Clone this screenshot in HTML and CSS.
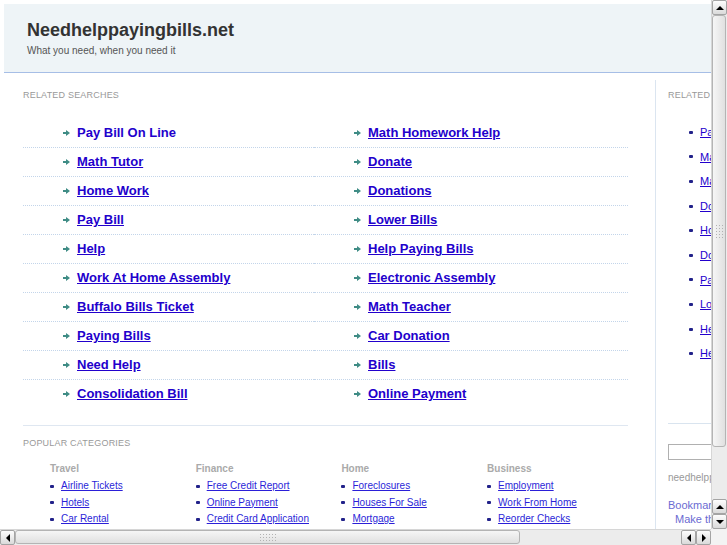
FILE: index.html
```html
<!DOCTYPE html>
<html lang="en">
<head>
    <meta charset="UTF-8">
    <title>Needhelppayingbills.net</title>
    <link rel="stylesheet" href="styles.css">
</head>
<body>
<div class="frame">
    <div class="viewport">
        <div class="page">
            <div class="header">
                <h1>Needhelppayingbills.net</h1>
                <p>What you need, when you need it</p>
            </div>
            <div class="main">
                <div class="content">
                    <h3 class="label">Related Searches</h3>
                    <ul class="searches">
                        <li><svg width="7" height="6" viewBox="0 0 7 6"><path d="M0 2h3V0l4 3-4 3V4H0z"/></svg><a href="#" class="plain">Pay Bill On Line</a></li>
                        <li><svg width="7" height="6" viewBox="0 0 7 6"><path d="M0 2h3V0l4 3-4 3V4H0z"/></svg><a href="#">Math Homework Help</a></li>
                        <li><svg width="7" height="6" viewBox="0 0 7 6"><path d="M0 2h3V0l4 3-4 3V4H0z"/></svg><a href="#">Math Tutor</a></li>
                        <li><svg width="7" height="6" viewBox="0 0 7 6"><path d="M0 2h3V0l4 3-4 3V4H0z"/></svg><a href="#">Donate</a></li>
                        <li><svg width="7" height="6" viewBox="0 0 7 6"><path d="M0 2h3V0l4 3-4 3V4H0z"/></svg><a href="#">Home Work</a></li>
                        <li><svg width="7" height="6" viewBox="0 0 7 6"><path d="M0 2h3V0l4 3-4 3V4H0z"/></svg><a href="#">Donations</a></li>
                        <li><svg width="7" height="6" viewBox="0 0 7 6"><path d="M0 2h3V0l4 3-4 3V4H0z"/></svg><a href="#">Pay Bill</a></li>
                        <li><svg width="7" height="6" viewBox="0 0 7 6"><path d="M0 2h3V0l4 3-4 3V4H0z"/></svg><a href="#">Lower Bills</a></li>
                        <li><svg width="7" height="6" viewBox="0 0 7 6"><path d="M0 2h3V0l4 3-4 3V4H0z"/></svg><a href="#">Help</a></li>
                        <li><svg width="7" height="6" viewBox="0 0 7 6"><path d="M0 2h3V0l4 3-4 3V4H0z"/></svg><a href="#">Help Paying Bills</a></li>
                        <li><svg width="7" height="6" viewBox="0 0 7 6"><path d="M0 2h3V0l4 3-4 3V4H0z"/></svg><a href="#">Work At Home Assembly</a></li>
                        <li><svg width="7" height="6" viewBox="0 0 7 6"><path d="M0 2h3V0l4 3-4 3V4H0z"/></svg><a href="#">Electronic Assembly</a></li>
                        <li><svg width="7" height="6" viewBox="0 0 7 6"><path d="M0 2h3V0l4 3-4 3V4H0z"/></svg><a href="#">Buffalo Bills Ticket</a></li>
                        <li><svg width="7" height="6" viewBox="0 0 7 6"><path d="M0 2h3V0l4 3-4 3V4H0z"/></svg><a href="#">Math Teacher</a></li>
                        <li><svg width="7" height="6" viewBox="0 0 7 6"><path d="M0 2h3V0l4 3-4 3V4H0z"/></svg><a href="#">Paying Bills</a></li>
                        <li><svg width="7" height="6" viewBox="0 0 7 6"><path d="M0 2h3V0l4 3-4 3V4H0z"/></svg><a href="#">Car Donation</a></li>
                        <li><svg width="7" height="6" viewBox="0 0 7 6"><path d="M0 2h3V0l4 3-4 3V4H0z"/></svg><a href="#">Need Help</a></li>
                        <li><svg width="7" height="6" viewBox="0 0 7 6"><path d="M0 2h3V0l4 3-4 3V4H0z"/></svg><a href="#">Bills</a></li>
                        <li><svg width="7" height="6" viewBox="0 0 7 6"><path d="M0 2h3V0l4 3-4 3V4H0z"/></svg><a href="#">Consolidation Bill</a></li>
                        <li><svg width="7" height="6" viewBox="0 0 7 6"><path d="M0 2h3V0l4 3-4 3V4H0z"/></svg><a href="#">Online Payment</a></li>
                    </ul>
                    <div class="popular">
                        <h3 class="label">Popular Categories</h3>
                        <div class="cats">
                            <div class="cat">
                                <h4>Travel</h4>
                                <ul>
                                    <li><a href="#">Airline Tickets</a></li>
                                    <li><a href="#">Hotels</a></li>
                                    <li><a href="#">Car Rental</a></li>
                                </ul>
                            </div>
                            <div class="cat">
                                <h4>Finance</h4>
                                <ul>
                                    <li><a href="#">Free Credit Report</a></li>
                                    <li><a href="#">Online Payment</a></li>
                                    <li><a href="#">Credit Card Application</a></li>
                                </ul>
                            </div>
                            <div class="cat">
                                <h4>Home</h4>
                                <ul>
                                    <li><a href="#">Foreclosures</a></li>
                                    <li><a href="#">Houses For Sale</a></li>
                                    <li><a href="#">Mortgage</a></li>
                                </ul>
                            </div>
                            <div class="cat">
                                <h4>Business</h4>
                                <ul>
                                    <li><a href="#">Employment</a></li>
                                    <li><a href="#">Work From Home</a></li>
                                    <li><a href="#">Reorder Checks</a></li>
                                </ul>
                            </div>
                        </div>
                    </div>
                </div>
                <div class="sidebar">
                    <h3 class="label">Related Searches</h3>
                    <ul class="side-links">
                        <li><a href="#">Pay Bill On Line</a></li>
                        <li><a href="#">Math Tutor</a></li>
                        <li><a href="#">Math Homework Help</a></li>
                        <li><a href="#">Donate</a></li>
                        <li><a href="#">Home Work</a></li>
                        <li><a href="#">Donations</a></li>
                        <li><a href="#">Pay Bill</a></li>
                        <li><a href="#">Lower Bills</a></li>
                        <li><a href="#">Help</a></li>
                        <li><a href="#">Help Paying Bills</a></li>
                    </ul>
                    <div class="side-rule"></div>
                    <input type="text" class="search-box">
                    <p class="domain">needhelppayingbills.net</p>
                    <a href="#" class="bookmark">Bookmark this page</a>
                    <a href="#" class="bookmark home">Make this your homepage</a>
                </div>
            </div>
        </div>
    </div>
    <div class="vscroll">
        <div class="sb-btn up"></div>
        <div class="vthumb"><span class="grip"></span></div>
        <div class="sb-track"></div>
        <div class="sb-btn up"></div>
        <div class="sb-btn down"></div>
    </div>
    <div class="hscroll">
        <div class="sb-btn left"></div>
        <div class="hthumb"><span class="grip"></span></div>
        <div class="sb-track"></div>
        <div class="sb-btn left"></div>
        <div class="sb-btn right"></div>
    </div>
    <div class="corner"></div>
</div>
</body>
</html>
```

FILE: styles.css
```css
html, body {
    margin: 0;
    padding: 0;
}
body {
    font-family: "Liberation Sans", Arial, sans-serif;
    background: #fff;
    overflow: hidden;
}
.frame {
    display: grid;
    grid-template-columns: 711px 16px;
    grid-template-rows: 529px 16px;
    width: 727px;
    height: 545px;
}
.viewport {
    overflow: hidden;
}
.page {
    width: 960px;
}

/* header */
.header {
    margin: 4px 0 0 4px;
    padding: 15px 0 14px 23px;
    background: #eef4f7;
    border-bottom: 1px solid #a6bee6;
}
.header h1 {
    margin: 0;
    font-size: 18px;
    line-height: 22px;
    color: #333;
}
.header p {
    margin: 3px 0 0;
    font-size: 10px;
    line-height: 14px;
    color: #555;
}

.main {
    display: flex;
    margin-top: 7px;
    padding-left: 23px;
}
.content {
    flex: none;
    width: 605px;
    padding-top: 10px;
}
.label {
    margin: 0;
    font-size: 9px;
    line-height: 11px;
    font-weight: normal;
    letter-spacing: 0.2px;
    color: #999;
    text-transform: uppercase;
}

/* related searches */
.searches {
    list-style: none;
    margin: 18px 0 0;
    padding: 0;
    display: grid;
    grid-template-columns: 291px 1fr;
}
.searches li {
    display: flex;
    align-items: center;
    gap: 7px;
    padding-left: 40px;
    border-bottom: 1px dotted #c3d5ea;
    font-size: 13px;
    line-height: 28px;
    font-weight: bold;
}
.searches li:nth-last-child(-n+2) {
    border-bottom: none;
}
.searches svg {
    fill: #3f8c85;
}
.searches a {
    color: #2200cc;
}
.searches a.plain {
    text-decoration: none;
}

/* popular categories */
.popular {
    margin-top: 17px;
    padding-top: 12px;
    border-top: 1px solid #dfe7f1;
}
.cats {
    display: flex;
    margin-top: 13px;
    padding-left: 27px;
}
.cat {
    flex: none;
    width: 145.7px;
}
.cat h4 {
    margin: 0 0 3px;
    font-size: 10px;
    line-height: 13px;
    color: #aaa;
}
.cat ul {
    list-style: none;
    margin: 0;
    padding: 0;
}
.cat li {
    display: flex;
    align-items: center;
    font-size: 10px;
    line-height: 16.5px;
}
.cat li::before,
.side-links li::before {
    content: "";
    width: 4px;
    height: 3px;
    margin-right: 7px;
    border-radius: 1px;
    background: #22228a;
}
.cat a {
    color: #2b1fd8;
}

/* sidebar */
.sidebar {
    flex: none;
    width: 250px;
    min-height: 460px;
    margin-left: 27px;
    padding: 10px 0 0 12px;
    border-left: 1px solid #dbe5f0;
}
.side-links {
    list-style: none;
    margin: 19px 0 0;
    padding-left: 21px;
}
.side-links li {
    display: flex;
    align-items: center;
    font-size: 11px;
    line-height: 24.6px;
}
.side-links a {
    color: #2200cc;
}
.side-rule {
    margin-top: 57px;
    border-top: 1px solid #d9e4ef;
}
.search-box {
    display: block;
    box-sizing: border-box;
    width: 150px;
    height: 16px;
    margin: 20px 0 0;
    border: 1px solid #b0b0b0;
    padding: 0;
}
.domain {
    margin: 12px 0 0;
    font-size: 10px;
    line-height: 12px;
    color: #999;
}
.bookmark {
    display: block;
    margin-top: 14px;
    font-size: 11px;
    line-height: 14px;
    color: #6b6bd2;
    text-decoration: none;
}
.bookmark.home {
    margin: 0 0 0 7px;
}

/* fake scrollbars */
.vscroll, .hscroll {
    display: flex;
    background: #ececec;
}
.vscroll {
    flex-direction: column;
    border-left: 1px solid #d6d6d6;
}
.hscroll {
    border-top: 1px solid #d6d6d6;
}
.sb-track {
    flex: 1;
}
.sb-btn {
    flex: none;
    box-sizing: border-box;
    width: 15px;
    height: 15px;
    border: 1px solid #a4a4a4;
    border-radius: 2px;
    background: linear-gradient(#fdfdfd, #dadada);
    display: flex;
    align-items: center;
    justify-content: center;
}
.sb-btn::before {
    content: "";
    border: 4px solid transparent;
}
.sb-btn.up::before {
    border-bottom-color: #000;
    border-top-width: 0;
}
.sb-btn.down::before {
    border-top-color: #000;
    border-bottom-width: 0;
}
.sb-btn.left::before {
    border-right-color: #000;
    border-left-width: 0;
}
.sb-btn.right::before {
    border-left-color: #000;
    border-right-width: 0;
}
.vthumb, .hthumb {
    box-sizing: border-box;
    border: 1px solid #b4b4b4;
    border-radius: 3px;
    display: flex;
    align-items: center;
    justify-content: center;
}
.vthumb {
    height: 432px;
    margin-right: 1px;
    background: linear-gradient(to right, #f6f6f6, #e0e0e0);
}
.hthumb {
    width: 505px;
    margin-bottom: 1px;
    background: linear-gradient(#f6f6f6, #e0e0e0);
}
.grip {
    width: 9px;
    height: 15px;
    background-image: radial-gradient(circle, #b2b2b2 0.7px, transparent 1px);
    background-size: 3px 3px;
}
.hthumb .grip {
    width: 18px;
    height: 9px;
}
.corner {
    background: #f3f3f3;
}
```
